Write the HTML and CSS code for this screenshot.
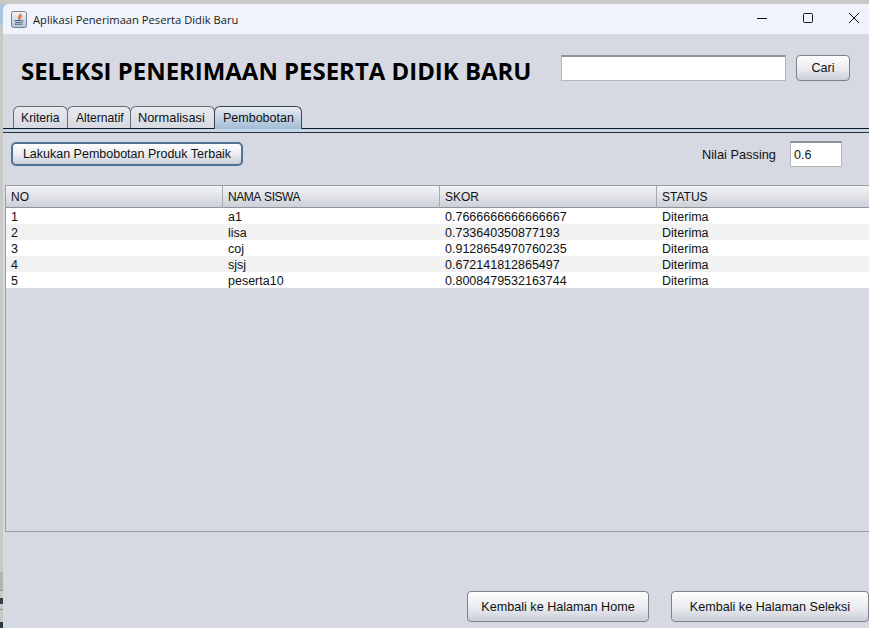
FILE: index.html
```html
<!DOCTYPE html>
<html lang="id">
<head>
<meta charset="utf-8">
<title>Aplikasi Penerimaan Peserta Didik Baru</title>
<link rel="stylesheet" href="styles.css">
</head>
<body>
<div class="window">
  <div class="titlebar">
    <svg class="app-icon" width="16" height="17" viewBox="0 0 16 17">
      <defs><linearGradient id="ig" x1="0" y1="0" x2="0" y2="1"><stop offset="0" stop-color="#f5f7fa"/><stop offset="1" stop-color="#b4c3d3"/></linearGradient></defs>
      <rect x="0.5" y="0.5" width="15" height="16" rx="2" fill="url(#ig)" stroke="#74818f"/>
      <path d="M9 2.5c1.2 1.6-2.2 2.8-1.2 4.8.3.7 1 1.2 1 1.2-.9-1.7 2.6-2.8 1.3-4.6" fill="none" stroke="#d9621e" stroke-width="1.3"/>
      <path d="M3.5 9.5h7M4 11.3h6.5M3.5 13.2h8" stroke="#4d6a88" stroke-width="1"/>
      <path d="M10.5 9.3c2.2-.3 2.2 2-.4 2.4" fill="none" stroke="#4d6a88" stroke-width=".9"/>
    </svg>
    <span class="title-text">Aplikasi Penerimaan Peserta Didik Baru</span>
    <div class="win-controls">
      <svg width="12" height="12" viewBox="0 0 12 12"><path d="M1 6.5h10" stroke="#111" stroke-width="1"/></svg>
      <svg width="12" height="12" viewBox="0 0 12 12"><rect x="1.5" y="1.5" width="9" height="9" rx="1" fill="none" stroke="#111"/></svg>
      <svg width="12" height="12" viewBox="0 0 12 12"><path d="M1 1l10 10M11 1L1 11" stroke="#111" stroke-width="1"/></svg>
    </div>
  </div>
  <div class="content">
    <header class="head">
      <h1 class="heading">SELEKSI PENERIMAAN PESERTA DIDIK BARU</h1>
      <input class="field search" type="text" aria-label="Cari">
      <button class="btn cari">Cari</button>
    </header>
    <nav class="tabs">
      <span class="tab t1">Kriteria</span>
      <span class="tab t2">Alternatif</span>
      <span class="tab t3">Normalisasi</span>
      <span class="tab t4 active">Pembobotan</span>
    </nav>
    <div class="tab-rule"></div>
    <div class="toolbar">
      <button class="btn primary">Lakukan Pembobotan Produk Terbaik</button>
      <label class="passing">Nilai Passing <input class="field small" type="text" value="0.6"></label>
    </div>
    <div class="table-pane">
      <div class="row th"><div class="c">NO</div><div class="c tight">NAMA SISWA</div><div class="c">SKOR</div><div class="c">STATUS</div></div>
      <div class="row"><div class="c">1</div><div class="c">a1</div><div class="c">0.7666666666666667</div><div class="c">Diterima</div></div>
      <div class="row alt"><div class="c">2</div><div class="c">lisa</div><div class="c">0.733640350877193</div><div class="c">Diterima</div></div>
      <div class="row"><div class="c">3</div><div class="c">coj</div><div class="c">0.9128654970760235</div><div class="c">Diterima</div></div>
      <div class="row alt"><div class="c">4</div><div class="c">sjsj</div><div class="c">0.672141812865497</div><div class="c">Diterima</div></div>
      <div class="row"><div class="c">5</div><div class="c">peserta10</div><div class="c">0.8008479532163744</div><div class="c">Diterima</div></div>
    </div>
    <footer class="foot">
      <button class="btn home">Kembali ke Halaman Home</button>
      <button class="btn seleksi">Kembali ke Halaman Seleksi</button>
    </footer>
  </div>
</div>
</body>
</html>
```
FILE: styles.css
```css
html, body { margin: 0; height: 100%; overflow: hidden; }
body {
  background: linear-gradient(#c9c9c6 0 4px, #a8c6de 4px 25px, #c9c9c6 25px 572px, #b4b4b1 572px 590px, #8e9196 590px 591px, #c9c9c6 591px 598px, #3a3a44 598px 604px, #c9c9c6 604px 609px, #8e9196 609px 610px, #c9c9c6 610px 622px, #2a3644 622px);
  font-family: "Liberation Sans", Arial, sans-serif;
  color: #111;
}
.window { margin: 4px 0 0 3px; height: 624px; display: flex; flex-direction: column; border-top-left-radius: 6px; overflow: hidden; }
.titlebar { height: 30px; flex: none; background: #f0f3fb; display: flex; align-items: center; padding-left: 8px; }
.app-icon { flex: none; }
.title-text { margin-left: 6px; font: 11.2px "Open Sans", sans-serif; color: #1a1a1a; }
.win-controls { margin-left: auto; display: flex; gap: 34px; padding-right: 9px; margin-top: -2px; }
.win-controls svg { display: block; }
.content { flex: 1; background: #d6d9e1; min-height: 0; }
.head { display: flex; align-items: flex-start; height: 68px; box-sizing: border-box; padding: 21px 19px 0 18px; }
.heading { margin: 1px 0 0; width: 540px; font: 700 23.95px/30px "Open Sans", sans-serif; color: #000; white-space: nowrap; flex: none; }
.field { box-sizing: border-box; background: #fff; border: 1px solid #b4b7ba; border-top: 2px solid #8f9296; font: 12.5px "Liberation Sans", Arial, sans-serif; color: #111; outline: none; margin: 0; }
.search { width: 225px; height: 26px; }
.btn { box-sizing: border-box; font: 12.6px "Liberation Sans", Arial, sans-serif; color: #111; border: 1px solid #7e8287; border-radius: 4px; background: linear-gradient(#fdfdfe, #e9ebf0 55%, #cbced7); padding: 0; margin: 0; }
.cari { width: 54px; height: 26px; margin-left: 10px; }
.tabs { display: flex; padding-left: 10px; height: 22px; margin-top: 4px; align-items: flex-start; }
.tab { box-sizing: border-box; height: 22px; padding-left: 7px; border: 1px solid #666c74; border-bottom: 0; border-radius: 6px 6px 0 0; background: linear-gradient(#e8eaee, #d6d9e1); font-size: 12.5px; line-height: 22px; white-space: nowrap; }
.t1 { width: 55px; font-size: 12.2px; }
.t2 { width: 64px; margin-left: -1px; padding-left: 8px; font-size: 12.1px; }
.t3 { width: 85px; margin-left: -1px; font-size: 12.8px; }
.t4 { width: 88px; margin-left: -1px; padding-left: 8px; }
.tab.active { background: linear-gradient(#e6ecf3, #a3bcd6); border-color: #3d444c; height: 23px; position: relative; }
.tab-rule { box-sizing: border-box; height: 5px; border-top: 1px solid #13181f; border-bottom: 1px solid #2a3038; background: #c5d5e8; }
.toolbar { display: flex; align-items: center; height: 26px; margin-top: 8px; padding: 0 27px 0 8px; }
.primary { width: 232px; height: 24px; border: 2px solid #4f7398; border-radius: 5px; font-size: 12.5px; }
.passing { margin-left: auto; font-size: 12.8px; display: flex; align-items: center; gap: 14px; }
.small { width: 52px; height: 26px; padding: 0 3px; }
.table-pane { margin: 18px 0 0 2px; height: 347px; box-sizing: border-box; border: 1px solid #9a9ea5; border-right: 0; overflow: hidden; }
.row { display: grid; grid-template-columns: 217px 217px 217px 1fr; height: 16px; background: #fff; font-size: 12.5px; line-height: 18px; }
.row.alt { background: #f2f2f2; }
.row .c { padding-left: 5px; white-space: nowrap; }
.row.th { height: 22px; font-size: 12px; line-height: 22px; background: linear-gradient(#f3f4f6, #d9dbe1 70%, #cdd0d7); border-bottom: 1px solid #8f939a; box-sizing: border-box; }
.row.th .c { border-right: 1px solid #a5a9b0; box-sizing: border-box; }
.row.th .c:last-child { border-right: 0; }
.row.th .tight { letter-spacing: -.45px; word-spacing: 1px; }
.foot { display: flex; justify-content: flex-end; gap: 22px; margin-top: 59px; }
.home { width: 182px; height: 31px; }
.seleksi { width: 198px; height: 31px; }
```
